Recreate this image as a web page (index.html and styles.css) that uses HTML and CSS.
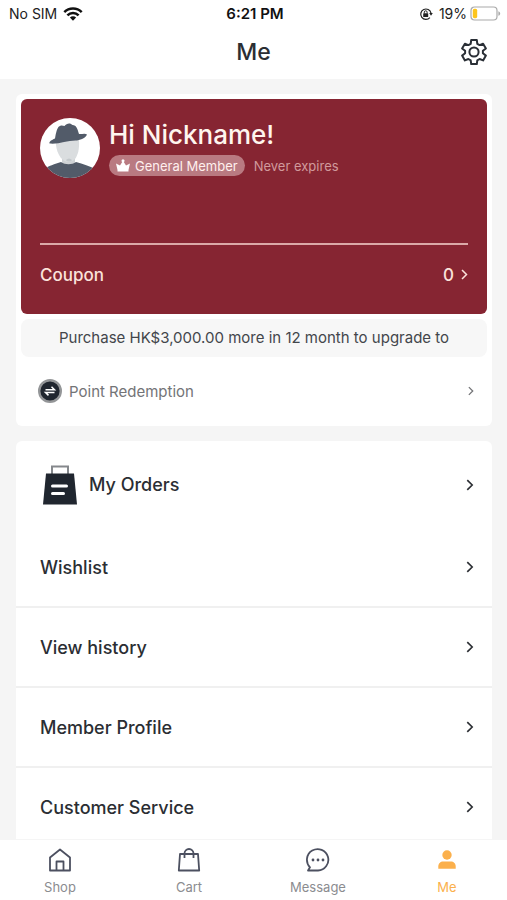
FILE: index.html
```html
<!DOCTYPE html>
<html lang="en">
<head>
<meta charset="utf-8">
<meta name="viewport" content="width=device-width, initial-scale=1">
<title>Me</title>
<link rel="stylesheet" href="styles.css">
</head>
<body>
<div class="status">
  <div class="status-side">
    <span>No SIM</span>
    <svg width="20" height="14" viewBox="0 0 20 14" aria-hidden="true">
      <g fill="none" stroke="#111" stroke-width="2.5"><path d="M1.3 5.2a12.3 12.3 0 0 1 17.4 0"/><path d="M4.4 8.3a7.9 7.9 0 0 1 11.2 0"/></g>
      <path d="M6.9 10.6a4.4 4.4 0 0 1 6.2 0L10 13.7z" fill="#111"/>
    </svg>
  </div>
  <span class="time">6:21 PM</span>
  <div class="status-side status-right">
    <svg class="lock" width="14" height="14" viewBox="0 0 14 14" aria-hidden="true">
      <path d="M10.9 10.6A5.2 5.2 0 1 1 12 6.1" fill="none" stroke="#222" stroke-width="1.2"/>
      <path d="M10.2 6h3.6L12 8.8z" fill="#222"/>
      <rect x="4.2" y="6.2" width="5" height="3.8" rx=".6" fill="#222"/>
      <path d="M5.3 6.4V5.2a1.4 1.4 0 0 1 2.8 0v1.2" fill="none" stroke="#222" stroke-width="1"/>
    </svg>
    <span>19%</span>
    <svg width="31" height="15" viewBox="0 0 31 15" aria-hidden="true">
      <rect x="1" y="1" width="26" height="13" rx="3.5" fill="#fff" stroke="#aaa" stroke-width="1.2"/>
      <rect x="2.8" y="2.8" width="4.4" height="9.4" rx="1.6" fill="#fdc51c"/>
      <path d="M28.4 5.2c2.4 1 2.4 3.6 0 4.6z" fill="#aaa"/>
    </svg>
  </div>
</div>

<header class="nav">
  <h1>Me</h1>
  <button class="settings" type="button" aria-label="Settings">
    <svg width="28" height="28" viewBox="0 0 28 28" fill="none" stroke="#2a2f36" stroke-width="2" stroke-linejoin="round" aria-hidden="true">
      <path d="M11.2 2h5.600l.5 3.800 2.300 1.300 3.500-1.400 2.800 4.800-3 2.300v2.500l3 2.300-2.800 4.800-3.500-1.400-2.300 1.300-.5 3.800h-5.600l-.5-3.800-2.300-1.300-3.500 1.400-2.800-4.800 3-2.300v-2.500l-3-2.300 2.800-4.800 3.500 1.400 2.300-1.300z"/>
      <circle cx="14" cy="14" r="4.6"/>
    </svg>
  </button>
</header>

<main class="content">
  <section class="card">
    <div class="member">
      <div class="profile">
        <svg class="avatar" viewBox="0 0 60 60" role="img" aria-label="Avatar">
          <defs><clipPath id="disc"><circle cx="30" cy="30" r="30"/></clipPath></defs>
          <g clip-path="url(#disc)">
            <path d="M0 0h60v60H0z" fill="#fff"/>
            <path d="M22 38h13v8c-3 4-10 4-13 0z" fill="#cfd2d5"/>
            <path d="M4 51c4-3 11-5 17-7 4 3 11 3 15 0 7 2 14 4 19 7v10H4z" fill="#525b69"/>
            <path d="M15.500 22h23.500c.5 9-1 15-4 19-4 4-9 4-13 0-4-4-6-10-6.500-19z" fill="#dadddf"/>
            <path d="M26 42c2-2 4-2 6 0-1 2-5 2-6 0z" fill="#c3c8cb"/>
            <path d="M9.500 25.500c-.5-2 2-3.500 5.500-5C16 15 17 9 20 8c2-1 3 0 4.500 0 2-3 6-3.500 8-1 4 0 5 4 6.500 9 2 .5 6-1 8 .5-1 3-5 5-10 6-9-.5-18 4-27.500 3z" fill="#525b69"/>
          </g>
        </svg>
        <div class="who">
          <h2>Hi Nickname!</h2>
          <div class="level">
            <span class="badge">
              <svg width="14" height="13" viewBox="0 0 14 13" fill="#fff" aria-hidden="true"><path d="M0 4.500l4 2L6.200 3h1.600L10 6.500l4-2L12.500 11h-11z"/><circle cx="7" cy="1.800" r="1.500"/><path d="M1.500 11h11v1.500h-11z"/></svg>
              General Member
            </span>
            <span class="expiry">Never expires</span>
          </div>
        </div>
      </div>
      <a class="coupon" href="#coupon">
        <span>Coupon</span>
        <span class="count">0
          <svg width="7" height="11" viewBox="0 0 7 11" class="chev" aria-hidden="true"><path d="M1 1l4.500 4.500L1 10"/></svg>
        </span>
      </a>
    </div>
    <p class="upgrade">Purchase HK$3,000.00 more in 12 month to upgrade to</p>
    <a class="points" href="#points">
      <svg width="24" height="24" viewBox="0 0 24 24" aria-hidden="true">
        <circle cx="12" cy="12" r="10.800" fill="#20262f" stroke="#949698" stroke-width="2.400"/>
        <path d="M7.500 10.800h9l-3-3M16.500 13.400h-9l3 3" fill="none" stroke="#fff" stroke-width="1.500"/>
      </svg>
      <span class="grow">Point Redemption</span>
      <svg width="6" height="10" viewBox="0 0 7 11" class="chev" aria-hidden="true"><path d="M1 1l4.500 4.500L1 10"/></svg>
    </a>
  </section>

  <nav class="card menu" aria-label="Account">
    <a class="orders" href="#orders">
      <svg width="34" height="40" viewBox="0 0 34 40" aria-hidden="true">
        <path d="M9 9V1.500h16V9" fill="none" stroke="#85888c" stroke-width="2"/>
        <path d="M3 8.500h28l3 31H0z" fill="#20262f"/>
        <path d="M9.500 21h14M9.500 28.500h11" stroke="#fff" stroke-width="3" stroke-linecap="round"/>
      </svg>
      <span class="grow">My Orders</span>
      <svg width="8" height="12" viewBox="0 0 7 11" class="chev" aria-hidden="true"><path d="M1 1l4.500 4.500L1 10"/></svg>
    </a>
    <a class="row" href="#wishlist"><span class="grow">Wishlist</span><svg width="8" height="12" viewBox="0 0 7 11" class="chev" aria-hidden="true"><path d="M1 1l4.500 4.500L1 10"/></svg></a>
    <a class="row" href="#history"><span class="grow">View history</span><svg width="8" height="12" viewBox="0 0 7 11" class="chev" aria-hidden="true"><path d="M1 1l4.500 4.500L1 10"/></svg></a>
    <a class="row" href="#profile"><span class="grow">Member Profile</span><svg width="8" height="12" viewBox="0 0 7 11" class="chev" aria-hidden="true"><path d="M1 1l4.500 4.500L1 10"/></svg></a>
    <a class="row" href="#service"><span class="grow">Customer Service</span><svg width="8" height="12" viewBox="0 0 7 11" class="chev" aria-hidden="true"><path d="M1 1l4.500 4.500L1 10"/></svg></a>
  </nav>
</main>

<nav class="tabs" aria-label="Main">
  <a href="#shop">
    <svg width="24" height="24" viewBox="0 0 24 24" class="line" aria-hidden="true"><path d="M2 9.500L12 1.500l10 8V22.500H2zM8.500 22v-8.500h7V22"/></svg>
    <span>Shop</span>
  </a>
  <a href="#cart">
    <svg width="24" height="24" viewBox="0 0 24 24" class="line" aria-hidden="true"><path d="M3 6h18l1.200 16.500H1.800zM7.500 10V5.500a4.500 4.500 0 0 1 9 0V10"/></svg>
    <span>Cart</span>
  </a>
  <a href="#message">
    <svg width="24" height="24" viewBox="0 0 24 24" class="line" aria-hidden="true"><path d="M2 22.500l2-3.200A10.700 10.700 0 1 1 12 22.500z"/><g class="dots"><circle cx="7" cy="12" r="1.400"/><circle cx="12" cy="12" r="1.400"/><circle cx="17" cy="12" r="1.400"/></g></svg>
    <span>Message</span>
  </a>
  <a class="active" href="#me" aria-current="page">
    <svg width="24" height="24" viewBox="0 0 24 24" fill="#fbb04c" aria-hidden="true"><circle cx="12" cy="7" r="4.700"/><path d="M3.300 20.700v-2.200c0-3 2-5 5-5h7.400c3 0 5 2 5 5v2.200z"/></svg>
    <span>Me</span>
  </a>
</nav>
</body>
</html>
```

FILE: styles.css
```css
* { box-sizing: border-box; }

body {
  margin: 0;
  height: 100vh;
  display: flex;
  flex-direction: column;
  background: #f5f5f5;
  color: #2b2e33;
  font-family: Inter, "Liberation Sans", sans-serif;
  font-size: 17px;
}

h1, h2, p { margin: 0; }

a { color: inherit; text-decoration: none; }

svg { flex: none; display: block; }

.grow { flex: 1; }

.status {
  display: grid;
  grid-template-columns: 1fr auto 1fr;
  align-items: center;
  height: 27px;
  padding: 0 6px 0 9px;
  background: #fff;
  color: #222;
  font-size: 14px;
}

.status-side { display: flex; align-items: center; gap: 6px; }
.status-right { justify-content: flex-end; gap: 3px; }
.lock { margin-right: 3px; }
.time { font-size: 15px; font-weight: 600; color: #111; }

.nav {
  display: grid;
  grid-template-columns: 1fr auto 1fr;
  align-items: center;
  height: 52px;
  padding: 0 19px 2px;
  background: #fff;
}

.nav h1 { grid-column: 2; font-size: 23px; font-weight: 500; }

.settings {
  justify-self: end;
  padding: 0;
  border: 0;
  background: none;
}

.content {
  flex: 1;
  min-height: 0;
  overflow-y: auto;
  scrollbar-width: none;
  padding: 15px 15px 0 16px;
}

.card {
  margin-bottom: 15px;
  padding: 5px;
  border-radius: 6px;
  background: #fff;
}

.member {
  padding: 19px;
  height: 215px;
  display: flex;
  flex-direction: column;
  justify-content: space-between;
  border-radius: 6px;
  background: #862532;
  color: #fbe3dc;
}

.profile { display: flex; gap: 9px; }
.avatar { width: 60px; height: 60px; }
.who h2 { color: #fff5ee; font-size: 26px; font-weight: 500; line-height: 33px; }
.level { display: flex; align-items: center; gap: 9px; margin-top: 4px; }

.badge {
  display: flex;
  align-items: center;
  gap: 5px;
  height: 21px;
  padding: 0 7px;
  border-radius: 11px;
  background: #b97a81;
  color: #fff0ee;
  font-size: 13px;
}

.expiry { color: #d19a9c; font-size: 13px; }

.coupon {
  display: flex;
  justify-content: space-between;
  align-items: center;
  height: 52px;
  padding-top: 9px;
  border-top: 2px solid #dba9a8;
  font-weight: 500;
}

.count { display: flex; align-items: center; gap: 7px; }

.chev {
  fill: none;
  stroke: currentColor;
  stroke-width: 1.5;
}

.upgrade {
  margin-top: 5px;
  border-radius: 8px;
  background: #f7f7f7;
  color: #43464b;
  font-size: 15px;
  line-height: 38px;
  text-align: center;
}

.points {
  display: flex;
  align-items: center;
  gap: 7px;
  height: 64px;
  padding: 4px 13px 0 17px;
  color: #737477;
  font-size: 15px;
}

.menu { padding: 0; font-size: 18px; font-weight: 500; }

.orders, .row {
  display: flex;
  align-items: center;
  padding: 0 18px 0 24px;
}

.orders { gap: 12px; height: 87px; padding-left: 27px; }
.row { height: 80px; border-bottom: 2px solid #f0f0f0; }

.tabs {
  display: grid;
  grid-template-columns: repeat(4, 72px);
  justify-content: space-between;
  height: 61px;
  padding: 0 24px 5px;
  border-top: 1px solid #f5f5f5;
  background: #fff;
  color: #8b8c90;
  font-size: 13px;
}

.tabs a {
  display: flex;
  flex-direction: column;
  align-items: center;
  justify-content: flex-end;
  gap: 7px;
  line-height: 16px;
}

.line { fill: none; stroke: #4c5060; stroke-width: 1.8; stroke-linejoin: round; }
.dots { fill: #4c5060; stroke: none; }
.tabs .active { color: #fbb04c; }
```
